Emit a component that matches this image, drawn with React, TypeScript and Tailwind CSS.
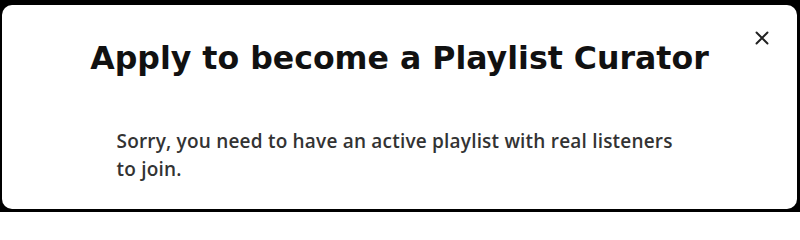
export default function App() {
  return (
    <div className="h-[212px] w-[800px] bg-black pt-[5px] pl-[2px] pr-[3px] pb-[3px]">
      <div className="relative h-full rounded-[10px] bg-white">
        <button
          aria-label="Close"
          className="absolute right-[28px] top-[26px] text-[#222]"
        >
          <svg width="14" height="14" viewBox="0 0 14 14" fill="none">
            <path d="M1.5 1.5l11 11M12.5 1.5l-11 11" stroke="currentColor" strokeWidth="2" strokeLinecap="round" />
          </svg>
        </button>
        <h1 className="pt-[31px] text-center font-['DejaVu_Sans',sans-serif] text-[31.6px] font-bold leading-[44px] text-[#111]">
          Apply to become a Playlist Curator
        </h1>
        <p className="mx-auto mt-[47px] w-[566px] font-['Open_Sans',sans-serif] text-[19px] font-semibold leading-[28px] tracking-[0.2px] text-[#333]">
          Sorry, you need to have an active playlist with real listeners to join.
        </p>
      </div>
    </div>
  );
}
